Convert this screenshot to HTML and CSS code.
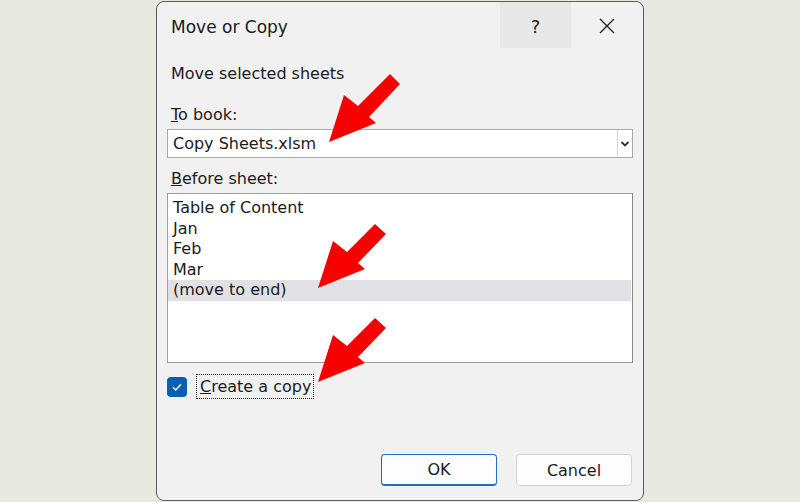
FILE: index.html
```html
<!DOCTYPE html>
<html lang="en">
<head>
    <meta charset="UTF-8">
    <meta name="viewport" content="width=device-width, initial-scale=1.0">
    <title>Move or Copy</title>
    <link rel="stylesheet" href="styles.css">
</head>
<body>
    <div class="dialog">
        <div class="titlebar">
            <span class="title">Move or Copy</span>
            <div class="tb-buttons">
                <div class="tb-btn help">?</div>
                <div class="tb-btn close">
                    <svg width="16" height="16" viewBox="0 0 16 16">
                        <path d="M1 1 L15 15 M15 1 L1 15" stroke="#222" stroke-width="1.4" fill="none"/>
                    </svg>
                </div>
            </div>
        </div>

        <div class="content">
            <div class="intro">Move selected sheets</div>

            <div class="label"><u>T</u>o book:</div>
            <div class="combo">
                <span class="combo-value">Copy Sheets.xlsm</span>
                <span class="combo-arrow">
                    <svg width="10" height="8" viewBox="0 0 10 8">
                        <path d="M1.5 2 L5 5.5 L8.5 2" stroke="#333" stroke-width="1.8" fill="none"/>
                    </svg>
                </span>
            </div>

            <div class="label"><u>B</u>efore sheet:</div>
            <ul class="listbox">
                <li>Table of Content</li>
                <li>Jan</li>
                <li>Feb</li>
                <li>Mar</li>
                <li class="selected">(move to end)</li>
            </ul>

            <label class="check-row">
                <span class="checkbox">
                    <svg width="12" height="10" viewBox="0 0 12 10">
                        <path d="M2 5.2 L4.8 8 L10 2.2" stroke="#fff" stroke-width="1.3" fill="none"/>
                    </svg>
                </span>
                <span class="check-label"><u>C</u>reate a copy</span>
            </label>

            <div class="actions">
                <button class="btn default">OK</button>
                <button class="btn">Cancel</button>
            </div>
        </div>
    </div>

    <!-- annotation arrows drawn over the dialog -->
    <svg class="arrows" width="800" height="502" viewBox="0 0 800 502">
        <polygon transform="translate(329 142)" points="0,0 15,-47 29,-36 61,-68 71,-58 40,-25 47,-19" />
        <polygon transform="translate(318 288)" points="0,0 15,-47 29,-36 57,-64 68,-54 40,-25 47,-19" />
        <polygon transform="translate(318 382)" points="0,0 15,-47 29,-36 57,-64 68,-54 40,-25 47,-19" />
    </svg>
</body>
</html>
```

FILE: styles.css
```css
body {
    margin: 0;
    width: 800px;
    height: 502px;
    background: #e9e9e4;
    font-family: 'DejaVu Sans', 'Open Sans', sans-serif;
    color: #1b1b1b;
    position: relative;
    overflow: hidden;
}
.dialog {
    box-sizing: border-box;
    width: 488px;
    height: 500px;
    margin: 1px 0 0 156px;
    background: #f1f1f1;
    border: 1px solid #5a5a5a;
    border-radius: 8px;
    display: flex;
    flex-direction: column;
}
.titlebar {
    height: 46px;
    display: flex;
    align-items: center;
    justify-content: space-between;
}
.title {
    padding: 3px 0 0 14px;
    font-size: 17px;
    color: #1a1a1a;
}
.tb-buttons {
    display: flex;
    height: 46px;
    align-self: flex-start;
}
.tb-btn {
    width: 72px;
    height: 46px;
    display: flex;
    align-items: center;
    justify-content: center;
}
.help {
    width: 71px;
    background: #e8e8e8;
    font-size: 18px;
    color: #222;
    padding-top: 2px;
    box-sizing: border-box;
}
.close {
    border-top-right-radius: 7px;
    padding-top: 1px;
    box-sizing: border-box;
}
.content {
    flex: 1;
    display: flex;
    flex-direction: column;
    padding: 0 10px 0 10px;
}
.intro {
    margin-top: 16px;
    padding-left: 4px;
    font-size: 16px;
    line-height: 20px;
}
.label {
    margin-top: 21px;
    padding-left: 4px;
    font-size: 16px;
    line-height: 20px;
}
.label + .listbox {
    margin-top: 4px;
}
.combo {
    box-sizing: border-box;
    margin-top: 4px;
    height: 29px;
    background: #fff;
    border: 1px solid #a9a9a9;
    display: flex;
    align-items: center;
}
.combo + .label {
    margin-top: 11px;
}
.combo-value {
    flex: 1;
    padding-left: 5px;
    font-size: 16px;
}
.combo-arrow {
    width: 14px;
    height: 27px;
    border-left: 1px solid #d8d8d8;
    display: flex;
    align-items: center;
    justify-content: center;
}
.listbox {
    box-sizing: border-box;
    height: 170px;
    margin: 0;
    padding: 4px 1px 0 0;
    list-style: none;
    background: #fff;
    border: 1px solid #a0a0a0;
    border-right-color: #8a8a8a;
}
.listbox li {
    height: 20.5px;
    line-height: 20.5px;
    padding-left: 5px;
    font-size: 16px;
}
.listbox li.selected {
    background: #e1e1e5;
}
.check-row {
    margin-top: 11px;
    height: 25px;
    display: flex;
    align-items: center;
}
.checkbox {
    width: 20px;
    height: 20px;
    border-radius: 4px;
    background: #0a5fb4;
    display: flex;
    align-items: center;
    justify-content: center;
}
.check-label {
    margin-left: 9px;
    padding: 0 2px 0 3px;
    height: 23px;
    line-height: 23px;
    border: 1px dotted #222;
    font-size: 16px;
}
.actions {
    margin-top: 55px;
    padding-right: 1px;
    display: flex;
    justify-content: flex-end;
    gap: 19px;
}
.btn {
    box-sizing: border-box;
    width: 116px;
    height: 32px;
    background: #fdfdfd;
    border: 1px solid #d3d3d3;
    border-radius: 4px;
    font-family: 'DejaVu Sans', 'Open Sans', sans-serif;
    font-size: 16px;
    color: #1b1b1b;
}
.btn.default {
    border: 1px solid #1c6fc4;
    border-bottom-width: 2px;
}
.arrows {
    position: absolute;
    left: 0;
    top: 0;
    pointer-events: none;
    fill: #f70000;
}
```
